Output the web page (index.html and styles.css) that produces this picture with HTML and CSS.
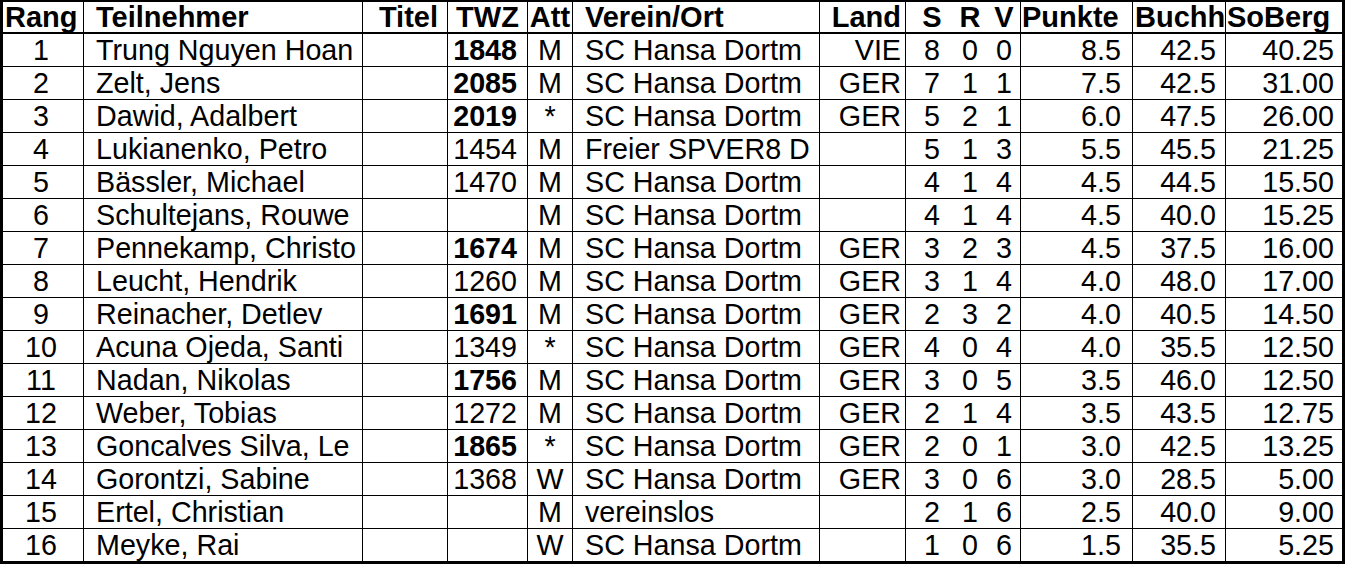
FILE: index.html
```html
<!DOCTYPE html>
<html lang="de">
<head>
<meta charset="utf-8">
<title>Rangliste</title>
<link rel="stylesheet" href="styles.css">
</head>
<body>
<div class="sheet">
  <div class="row head">
    <div class="c rang">Rang</div>
    <div class="c name">Teilnehmer</div>
    <div class="c titel">Titel</div>
    <div class="c twz">TWZ</div>
    <div class="c att">Att</div>
    <div class="c verein">Verein/Ort</div>
    <div class="c land">Land</div>
    <div class="c s">S</div>
    <div class="c r">R</div>
    <div class="c v">V</div>
    <div class="c pkt">Punkte</div>
    <div class="c buch">Buchh</div>
    <div class="c sob">SoBerg</div>
  </div>
  <div class="row"><div class="c rang">1</div><div class="c name">Trung Nguyen Hoan</div><div class="c titel"></div><div class="c twz b">1848</div><div class="c att">M</div><div class="c verein">SC Hansa Dortm</div><div class="c land">VIE</div><div class="c s">8</div><div class="c r">0</div><div class="c v">0</div><div class="c pkt">8.5</div><div class="c buch">42.5</div><div class="c sob">40.25</div></div>
  <div class="row"><div class="c rang">2</div><div class="c name">Zelt, Jens</div><div class="c titel"></div><div class="c twz b">2085</div><div class="c att">M</div><div class="c verein">SC Hansa Dortm</div><div class="c land">GER</div><div class="c s">7</div><div class="c r">1</div><div class="c v">1</div><div class="c pkt">7.5</div><div class="c buch">42.5</div><div class="c sob">31.00</div></div>
  <div class="row"><div class="c rang">3</div><div class="c name">Dawid, Adalbert</div><div class="c titel"></div><div class="c twz b">2019</div><div class="c att">*</div><div class="c verein">SC Hansa Dortm</div><div class="c land">GER</div><div class="c s">5</div><div class="c r">2</div><div class="c v">1</div><div class="c pkt">6.0</div><div class="c buch">47.5</div><div class="c sob">26.00</div></div>
  <div class="row"><div class="c rang">4</div><div class="c name">Lukianenko, Petro</div><div class="c titel"></div><div class="c twz">1454</div><div class="c att">M</div><div class="c verein">Freier SPVER8 D</div><div class="c land"></div><div class="c s">5</div><div class="c r">1</div><div class="c v">3</div><div class="c pkt">5.5</div><div class="c buch">45.5</div><div class="c sob">21.25</div></div>
  <div class="row"><div class="c rang">5</div><div class="c name">Bässler, Michael</div><div class="c titel"></div><div class="c twz">1470</div><div class="c att">M</div><div class="c verein">SC Hansa Dortm</div><div class="c land"></div><div class="c s">4</div><div class="c r">1</div><div class="c v">4</div><div class="c pkt">4.5</div><div class="c buch">44.5</div><div class="c sob">15.50</div></div>
  <div class="row"><div class="c rang">6</div><div class="c name">Schultejans, Rouwe</div><div class="c titel"></div><div class="c twz"></div><div class="c att">M</div><div class="c verein">SC Hansa Dortm</div><div class="c land"></div><div class="c s">4</div><div class="c r">1</div><div class="c v">4</div><div class="c pkt">4.5</div><div class="c buch">40.0</div><div class="c sob">15.25</div></div>
  <div class="row"><div class="c rang">7</div><div class="c name">Pennekamp, Christo</div><div class="c titel"></div><div class="c twz b">1674</div><div class="c att">M</div><div class="c verein">SC Hansa Dortm</div><div class="c land">GER</div><div class="c s">3</div><div class="c r">2</div><div class="c v">3</div><div class="c pkt">4.5</div><div class="c buch">37.5</div><div class="c sob">16.00</div></div>
  <div class="row"><div class="c rang">8</div><div class="c name">Leucht, Hendrik</div><div class="c titel"></div><div class="c twz">1260</div><div class="c att">M</div><div class="c verein">SC Hansa Dortm</div><div class="c land">GER</div><div class="c s">3</div><div class="c r">1</div><div class="c v">4</div><div class="c pkt">4.0</div><div class="c buch">48.0</div><div class="c sob">17.00</div></div>
  <div class="row"><div class="c rang">9</div><div class="c name">Reinacher, Detlev</div><div class="c titel"></div><div class="c twz b">1691</div><div class="c att">M</div><div class="c verein">SC Hansa Dortm</div><div class="c land">GER</div><div class="c s">2</div><div class="c r">3</div><div class="c v">2</div><div class="c pkt">4.0</div><div class="c buch">40.5</div><div class="c sob">14.50</div></div>
  <div class="row"><div class="c rang">10</div><div class="c name">Acuna Ojeda, Santi</div><div class="c titel"></div><div class="c twz">1349</div><div class="c att">*</div><div class="c verein">SC Hansa Dortm</div><div class="c land">GER</div><div class="c s">4</div><div class="c r">0</div><div class="c v">4</div><div class="c pkt">4.0</div><div class="c buch">35.5</div><div class="c sob">12.50</div></div>
  <div class="row"><div class="c rang">11</div><div class="c name">Nadan, Nikolas</div><div class="c titel"></div><div class="c twz b">1756</div><div class="c att">M</div><div class="c verein">SC Hansa Dortm</div><div class="c land">GER</div><div class="c s">3</div><div class="c r">0</div><div class="c v">5</div><div class="c pkt">3.5</div><div class="c buch">46.0</div><div class="c sob">12.50</div></div>
  <div class="row"><div class="c rang">12</div><div class="c name">Weber, Tobias</div><div class="c titel"></div><div class="c twz">1272</div><div class="c att">M</div><div class="c verein">SC Hansa Dortm</div><div class="c land">GER</div><div class="c s">2</div><div class="c r">1</div><div class="c v">4</div><div class="c pkt">3.5</div><div class="c buch">43.5</div><div class="c sob">12.75</div></div>
  <div class="row"><div class="c rang">13</div><div class="c name">Goncalves Silva, Le</div><div class="c titel"></div><div class="c twz b">1865</div><div class="c att">*</div><div class="c verein">SC Hansa Dortm</div><div class="c land">GER</div><div class="c s">2</div><div class="c r">0</div><div class="c v">1</div><div class="c pkt">3.0</div><div class="c buch">42.5</div><div class="c sob">13.25</div></div>
  <div class="row"><div class="c rang">14</div><div class="c name">Gorontzi, Sabine</div><div class="c titel"></div><div class="c twz">1368</div><div class="c att">W</div><div class="c verein">SC Hansa Dortm</div><div class="c land">GER</div><div class="c s">3</div><div class="c r">0</div><div class="c v">6</div><div class="c pkt">3.0</div><div class="c buch">28.5</div><div class="c sob">5.00</div></div>
  <div class="row"><div class="c rang">15</div><div class="c name">Ertel, Christian</div><div class="c titel"></div><div class="c twz"></div><div class="c att">M</div><div class="c verein">vereinslos</div><div class="c land"></div><div class="c s">2</div><div class="c r">1</div><div class="c v">6</div><div class="c pkt">2.5</div><div class="c buch">40.0</div><div class="c sob">9.00</div></div>
  <div class="row last"><div class="c rang">16</div><div class="c name">Meyke, Rai</div><div class="c titel"></div><div class="c twz"></div><div class="c att">W</div><div class="c verein">SC Hansa Dortm</div><div class="c land"></div><div class="c s">1</div><div class="c r">0</div><div class="c v">6</div><div class="c pkt">1.5</div><div class="c buch">35.5</div><div class="c sob">5.25</div></div>
</div>
</body>
</html>
```

FILE: styles.css
```css
html, body {
  margin: 0;
  padding: 0;
  background: #ffffff;
}

.sheet {
  width: 1345px;
  box-sizing: border-box;
  border-style: solid;
  border-color: #000;
  border-width: 2px 3px 3px 3px;
  font-family: "Liberation Sans", Arial, sans-serif;
  font-size: 28.7px;
  color: #000;
}

.row {
  display: grid;
  grid-template-columns: 81px 279px 85px 80px 45px 247px 86px 46px 36px 33px 112px 93px 116px;
  height: 33px;
  box-sizing: border-box;
  border-bottom: 1px solid #000;
}

.row.head {
  height: 32px;
  border-bottom: 2px solid #000;
  font-weight: bold;
  font-size: 29px;
}

.row.last {
  height: 32px;
  border-bottom: none;
}

.c {
  box-sizing: border-box;
  border-right: 1px solid #000;
  white-space: nowrap;
  overflow: hidden;
  line-height: 32px;
}

.head .c {
  line-height: 30px;
}

.c.s, .c.r, .c.sob {
  border-right: none;
}

.b {
  font-weight: bold;
}

.rang { text-align: center; padding-right: 4px; }
.name { padding-left: 12px; }
.titel { text-align: right; padding-right: 9px; }
.twz { text-align: right; padding-right: 10px; }
.att { text-align: center; }
.verein { padding-left: 12px; }
.land { text-align: right; padding-right: 4px; }
.s { text-align: center; padding-left: 6px; }
.r { text-align: center; }
.v { text-align: center; }
.pkt { text-align: right; padding-right: 11px; }
.buch { text-align: right; padding-right: 9px; }
.sob { text-align: right; padding-right: 8px; }

.head .rang { text-align: left; padding-left: 2px; padding-right: 0; }
.head .twz { text-align: center; padding-right: 0; }
.head .pkt { text-align: left; padding-left: 1px; padding-right: 0; }
.head .buch { text-align: left; padding-left: 2px; padding-right: 0; }
.head .sob { text-align: left; padding-left: 1px; padding-right: 0; }
```
